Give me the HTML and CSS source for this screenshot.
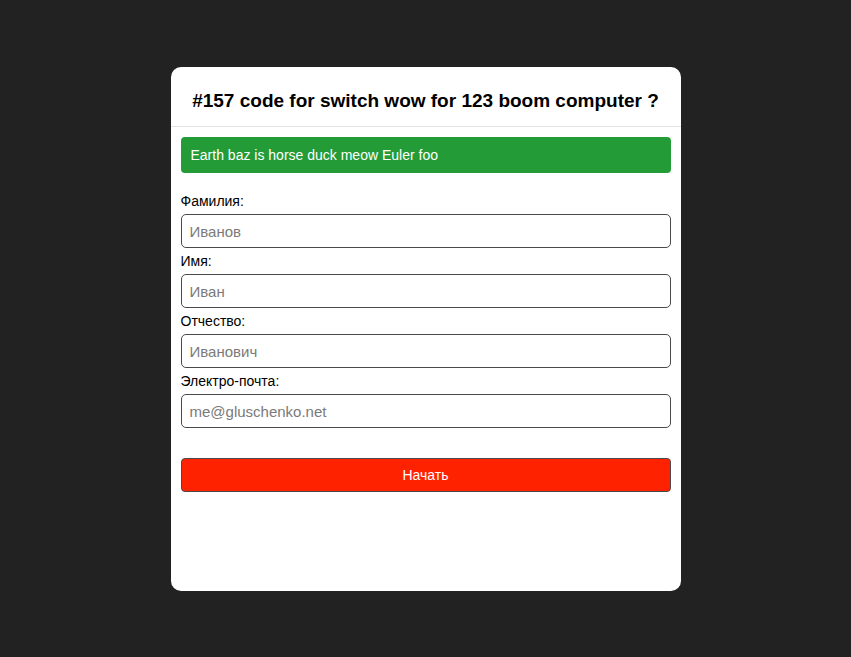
FILE: index.html
```html
<!DOCTYPE html>
<html lang="ru">
<head>
<meta charset="utf-8">
<title>Form</title>
<link rel="stylesheet" href="styles.css">
</head>
<body>
<div class="page">
  <div class="card">
    <div class="card-header">
      <h1 class="title">#157 code for switch wow for 123 boom computer ?</h1>
    </div>
    <div class="card-body">
      <div class="alert">Earth baz is horse duck meow Euler foo</div>
      <form class="form">
        <label class="label">Фамилия:</label>
        <input class="input" type="text" placeholder="Иванов">
        <label class="label">Имя:</label>
        <input class="input" type="text" placeholder="Иван">
        <label class="label">Отчество:</label>
        <input class="input" type="text" placeholder="Иванович">
        <label class="label">Электро-почта:</label>
        <input class="input" type="text" placeholder="me@gluschenko.net">
        <button class="button" type="button">Начать</button>
      </form>
    </div>
  </div>
</div>
</body>
</html>
```
FILE: styles.css
```css
html, body {
  margin: 0;
  padding: 0;
  background: #222222;
  font-family: "Liberation Sans", Arial, sans-serif;
}
.page {
  display: flex;
  justify-content: center;
  padding-top: 67px;
}
.card {
  width: 510px;
  height: 524px;
  background: #ffffff;
  border-radius: 10px;
  box-sizing: border-box;
}
.card-header {
  height: 60px;
  border-bottom: 1px solid #e2e2e2;
  display: flex;
  align-items: center;
  justify-content: center;
  box-sizing: border-box;
  padding-top: 9px;
}
.title {
  margin: 0;
  font-size: 19px;
  font-weight: bold;
  color: #000;
}
.card-body {
  padding: 10px;
}
.alert {
  height: 36px;
  background: #239b37;
  color: #ffffff;
  border-radius: 4px;
  font-size: 14px;
  line-height: 36px;
  padding: 0 10px;
}
.form {
  display: flex;
  flex-direction: column;
  padding-top: 15px;
}
.label {
  display: block;
  height: 26px;
  line-height: 26px;
  font-size: 14px;
  color: #000;
}
.input {
  height: 34px;
  box-sizing: border-box;
  border: 1px solid #4a4a4a;
  border-radius: 5px;
  padding: 0 8px;
  font-family: "Liberation Sans", Arial, sans-serif;
  font-size: 15px;
  color: #000;
  margin: 0;
}
.input::placeholder {
  color: #7a7a7a;
}
.button {
  margin-top: 30px;
  height: 34px;
  background: #ff2200;
  border: 1px solid #4a4a4a;
  border-radius: 4px;
  color: #fff;
  font-family: "Liberation Sans", Arial, sans-serif;
  font-size: 14px;
}
```
